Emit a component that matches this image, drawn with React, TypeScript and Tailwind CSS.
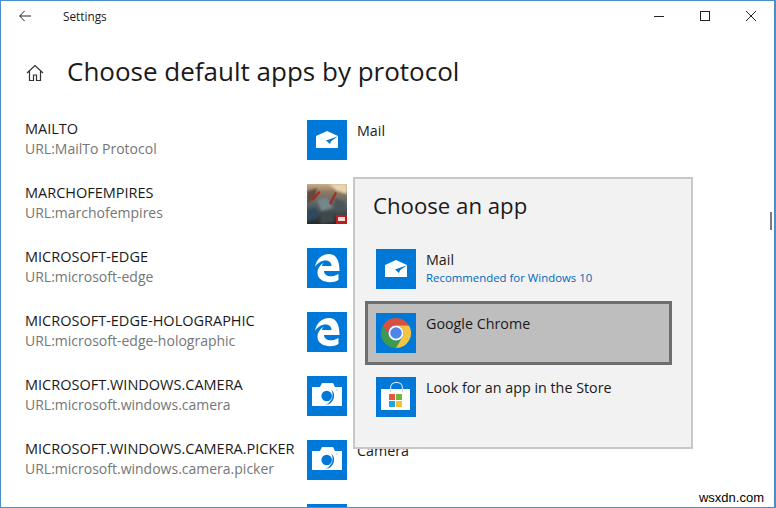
import React from "react";

const MailIcon = () => (
  <svg viewBox="0 0 40 40" className="w-[40px] h-[40px] shrink-0 bg-[#0078d7]">
    <path d="M9 16 L20 11 L31 16 V28 H9 Z" fill="#fff" />
    <path d="M31 16.2 L19 20.6 L23 24 L24 21.2 Z" fill="#0078d7" />
    <path d="M9 16.3 L19 20.6" stroke="#cfe5f6" strokeWidth="0.6" />
  </svg>
);

const EdgeIcon = () => (
  <svg viewBox="0 0 40 40" className="w-[40px] h-[40px] shrink-0 bg-[#0078d7]">
    <path
      d="M8 19 C9.5 11 15 6 22 6 C29 6 32.5 12 32.5 23 L17 23 C17 28 24 30.5 31.5 26 L31.5 32 C24 36.5 10.5 34 10.5 25 C10.5 20.5 13 17 17 14.5 C15.5 16 15 17 15 18 L24.5 18 C24.5 14.5 22 12.5 18.5 12.5 C14.5 12.5 10.5 15 8 19 Z"
      fill="#fff"
    />
  </svg>
);

const CameraIcon = () => (
  <svg viewBox="0 0 40 40" className="w-[40px] h-[40px] shrink-0 bg-[#0078d7]">
    <path d="M5 11 H13 L15 7 H26 L28 11 H35 V30 H5 Z" fill="#fff" />
    <circle cx="19.7" cy="20" r="5.3" fill="#0078d7" />
    <path d="M24 13.5 A8.5 8.5 0 0 1 18.5 28.5 A10 10 0 0 0 24 13.5 Z" fill="#0078d7" />
    <circle cx="30" cy="14" r="0.7" fill="#9cc9ec" />
  </svg>
);

const ChromeIcon = () => (
  <svg viewBox="0 0 40 40" className="w-[40px] h-[40px] shrink-0 bg-[#0078d7]">
    <path d="M7 12.5 A15 15 0 0 1 33 12.5 L20 12.5 A7.5 7.5 0 0 0 13.5 23.75 Z" fill="#d8503f" />
    <path d="M7 12.5 A15 15 0 0 0 20 35 L26.5 23.75 A7.5 7.5 0 0 1 13.5 23.75 Z" fill="#3e9a4f" />
    <path d="M20 35 A15 15 0 0 0 33 12.5 L20 12.5 A7.5 7.5 0 0 1 26.5 23.75 Z" fill="#f4c542" />
    <circle cx="20" cy="20" r="7.5" fill="#fff" />
    <circle cx="20" cy="20" r="5.8" fill="#4f86ec" />
  </svg>
);

const StoreIcon = () => (
  <svg viewBox="0 0 40 40" className="w-[40px] h-[40px] shrink-0 bg-[#0078d7]">
    <path d="M14.5 16 V11 C14.5 3.5 26.5 3.5 26.5 11 V16" fill="none" stroke="#d6e9f8" strokeWidth="1.2" />
    <path d="M5 12 H34 V33 H5 Z" fill="#fff" />
    <path d="M14.5 12 V15 M26.5 12 V15" stroke="#b8d8f0" strokeWidth="1" />
    <rect x="13" y="17" width="6" height="6" fill="#e8553a" />
    <rect x="20" y="17" width="6" height="6" fill="#6fb53a" />
    <rect x="13" y="24" width="6" height="6" fill="#1ea5e8" />
    <rect x="20" y="24" width="6" height="6" fill="#fbc02d" />
  </svg>
);

const GameIcon = () => (
  <svg viewBox="0 0 40 40" className="w-[40px] h-[40px] shrink-0">
    <defs>
      <linearGradient id="sky" x1="0" y1="0" x2="0" y2="1">
        <stop offset="0" stopColor="#c9ae86" />
        <stop offset="0.2" stopColor="#8f7a62" />
        <stop offset="0.5" stopColor="#596468" />
        <stop offset="1" stopColor="#22282b" />
      </linearGradient>
      <filter id="blur">
        <feGaussianBlur stdDeviation="0.8" />
      </filter>
    </defs>
    <rect width="40" height="40" fill="url(#sky)" />
    <g filter="url(#blur)">
      <path d="M22 0 H40 V10 L30 7 Z" fill="#e6d5ae" />
      <path d="M0 8 L10 4 L8 14 L0 20 Z" fill="#5f4c3e" />
      <path d="M10 16 L20 13 L26 24 L14 27 Z" fill="#74868c" />
      <path d="M28 14 L38 18 L36 28 L28 26 Z" fill="#4b5558" />
      <path d="M0 26 L9 24 L11 33 L0 38 Z" fill="#2f4a5e" />
      <path d="M14 30 L26 29 L27 38 L13 40 Z" fill="#3e4a4c" />
    </g>
    <path d="M4 15 L12 7 L13.5 8.5 L6 17 Z M22 19 L28 8 L30 9 L24 21 Z" fill="#9c2f26" />
    <rect x="29" y="31" width="11" height="9" fill="#b81f1b" />
    <rect x="31" y="33" width="7" height="4" fill="#efd9d9" />
  </svg>
);

const rows = [
  { name: "MAILTO", url: "URL:MailTo Protocol", icon: <MailIcon />, app: "Mail" },
  { name: "MARCHOFEMPIRES", url: "URL:marchofempires", icon: <GameIcon />, app: "" },
  { name: "MICROSOFT-EDGE", url: "URL:microsoft-edge", icon: <EdgeIcon />, app: "" },
  { name: "MICROSOFT-EDGE-HOLOGRAPHIC", url: "URL:microsoft-edge-holographic", icon: <EdgeIcon />, app: "" },
  { name: "MICROSOFT.WINDOWS.CAMERA", url: "URL:microsoft.windows.camera", icon: <CameraIcon />, app: "" },
  { name: "MICROSOFT.WINDOWS.CAMERA.PICKER", url: "URL:microsoft.windows.camera.picker", icon: <CameraIcon />, app: "Camera" },
];

export default function App() {
  return (
    <div className="relative w-[776px] h-[508px] overflow-hidden bg-white border-l border-t border-b border-r-2 border-[#4a8fca] font-['Open_Sans','Noto_Sans',sans-serif] text-[#1a1a1a]">
      <div className="flex items-center h-[30px] pl-[18px]">
        <svg viewBox="0 0 12 12" className="w-[12px] h-[12px] mt-[-1px]" fill="none" stroke="#222" strokeWidth="1">
          <path d="M12 6 H0.7 M5.7 0.8 L0.7 6 L5.7 11.2" />
        </svg>
        <span className="ml-[32px] text-[11.8px] mt-[1px]">Settings</span>
        <div className="ml-auto flex items-center gap-[36px] pr-[18px]">
          <svg viewBox="0 0 10 10" className="w-[10px] h-[10px]" stroke="#222" strokeWidth="1"><path d="M0 5.5 H10" /></svg>
          <svg viewBox="0 0 10 10" className="w-[10px] h-[10px]" stroke="#222" strokeWidth="1" fill="none"><rect x="0.5" y="0.5" width="9" height="9" /></svg>
          <svg viewBox="0 0 10 10" className="w-[10px] h-[10px]" stroke="#222" strokeWidth="1"><path d="M0 0 L10 10 M10 0 L0 10" /></svg>
        </div>
      </div>

      <div className="flex items-center mt-[23px] pl-[25px] h-[34px]">
        <svg viewBox="0 0 18 18" className="w-[18px] h-[18px] mt-[3px]" fill="none" stroke="#333" strokeWidth="1.2">
          <path d="M1 9 L9 1.5 L17 9 M3.5 7 V16.5 H7.5 V11 H10.5 V16.5 H14.5 V7" />
        </svg>
        <h1 className="ml-[23px] text-[26px] font-normal leading-none">Choose default apps by protocol</h1>
      </div>

      <div className="flex flex-col gap-[24px] mt-[32px] pl-[24px]">
        {rows.map((row) => (
          <div key={row.name} className="flex h-[40px]">
            <div className="w-[282px] shrink-0">
              <div className="text-[14.5px] leading-[20px] mt-[-1px] whitespace-nowrap">{row.name}</div>
              <div className="text-[14px] leading-[20px] text-[#767676] whitespace-nowrap">{row.url}</div>
            </div>
            {row.icon}
            <span className="ml-[10px] text-[14.3px] leading-[20px] mt-[1px]">{row.app}</span>
          </div>
        ))}
        <div className="h-[40px] w-[40px] ml-[282px] bg-[#0078d7]" />
      </div>

      <div className="absolute left-[352px] top-[176px] w-[340px] h-[272px] bg-[#f2f2f2] border-2 border-[#c8c8c8] pt-[12px]">
        <div className="pl-[18px] text-[22.2px] leading-[30px]">Choose an app</div>
        <div className="mt-[20px] flex flex-col">
          <div className="flex h-[60px] items-start pl-[21px] pt-[8px] gap-[10px]">
            <MailIcon />
            <div className="mt-[1px]">
              <div className="text-[14.3px] leading-[20px]">Mail</div>
              <div className="text-[11.4px] leading-[16px] text-[#0067c0]">Recommended for Windows 10</div>
            </div>
          </div>
          <div className="flex h-[64px] w-[307px] ml-[10px] items-start pl-[8px] pt-[9px] gap-[10px] bg-[#bebebe] border-[3px] border-[#6e6e6e]">
            <ChromeIcon />
            <div className="text-[14.3px] leading-[20px] mt-[1px]">Google Chrome</div>
          </div>
          <div className="flex h-[64px] items-start pl-[21px] pt-[12px] gap-[10px]">
            <StoreIcon />
            <div className="text-[14.3px] leading-[20px] mt-[1px]">Look for an app in the Store</div>
          </div>
        </div>
      </div>

      <div className="absolute left-[769px] top-[211px] w-[2px] h-[18px] bg-[#7a7a7a]" />
      <div className="absolute right-[10px] bottom-[1px] font-['Liberation_Sans',sans-serif] text-[13px] leading-[16px] text-black">wsxdn.com</div>
    </div>
  );
}
